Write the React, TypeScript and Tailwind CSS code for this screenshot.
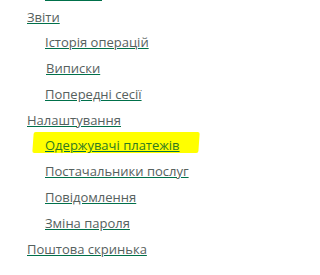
const items = [
  { label: "Звіти", level: 0 },
  { label: "Історія операцій", level: 1 },
  { label: "Виписки", level: 1, nudge: true },
  { label: "Попередні сесії", level: 1 },
  { label: "Налаштування", level: 0 },
  { label: "Одержувачі платежів", level: 1, active: true },
  { label: "Постачальники послуг", level: 1 },
  { label: "Повідомлення", level: 1 },
  { label: "Зміна пароля", level: 1 },
  { label: "Поштова скринька", level: 0 },
];

export default function App() {
  return (
    <div className="w-[215px] h-[275px] overflow-hidden bg-white font-['Open_Sans',sans-serif] text-[13px]">
      {/* underline of the item cut off above */}
      <div className="ml-[45px] w-[57px] h-[1px] bg-[#00704a]" />
      <ul className="mt-[3.5px]">
        {items.map((item) => (
          <li
            key={item.label}
            className={`h-[25.8px] leading-[25.8px] whitespace-nowrap ${
              item.level === 0 ? "pl-[27px]" : item.nudge ? "pl-[46px]" : "pl-[45px]"
            }`}
          >
            {item.active ? (
              <span className="relative inline-block">
                <span className="absolute left-[-12px] right-[-19px] top-[-1.5px] bottom-[6px] bg-[#ffff00] rounded-[2px] skew-x-[-4deg]" />
                <a className="relative text-[#2f7a22] underline decoration-[#00704a] underline-offset-[1px]">
                  {item.label}
                </a>
              </span>
            ) : (
              <a className="text-[#56615e] underline decoration-[#00704a] underline-offset-[1px]">
                {item.label}
              </a>
            )}
          </li>
        ))}
      </ul>
    </div>
  );
}
